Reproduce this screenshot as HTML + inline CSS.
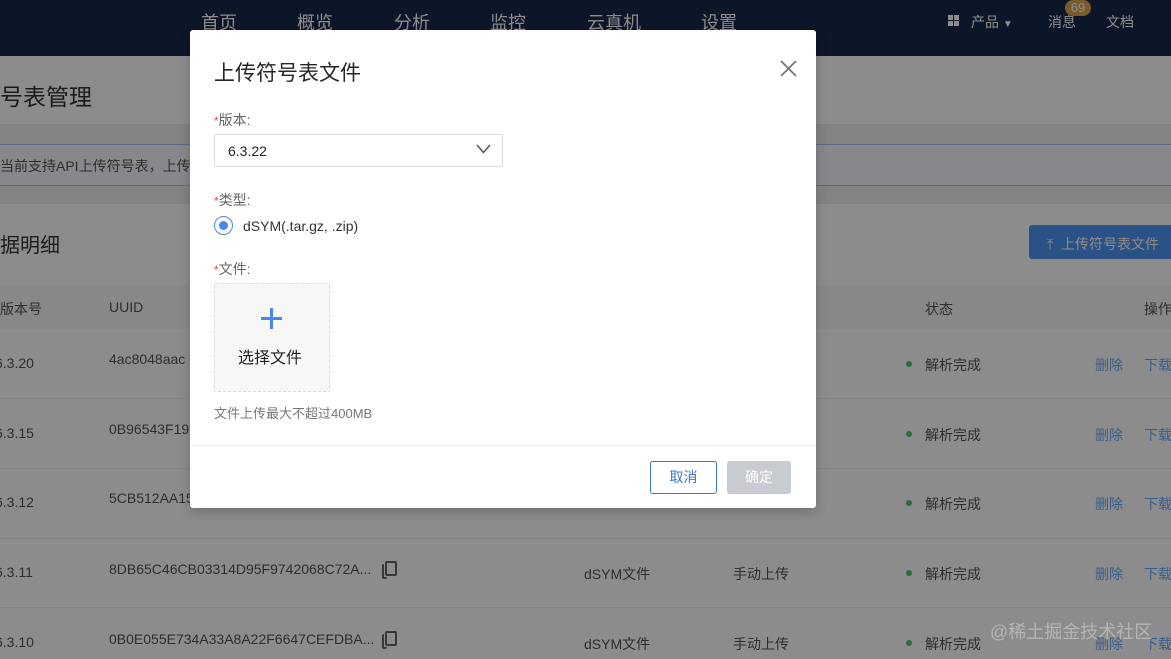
<!DOCTYPE html>
<html><head><meta charset="utf-8"><style>
*{margin:0;padding:0;box-sizing:border-box}
html,body{background:#fff}
body{width:1171px;height:659px;overflow:hidden;position:relative;font-family:"Liberation Sans","Noto Sans CJK SC",sans-serif;color:#555}
.a{position:absolute;white-space:nowrap}
.hdr{position:absolute;left:0;top:0;width:1171px;height:56px;background:#18274a}
.nav{color:#fff;font-size:18px;top:9px}
.tr{font-size:14px;color:#555}
.blue{color:#6aabff}
.dot{position:absolute;width:6px;height:6px;border-radius:3px;background:#54c36a}
.sep{position:absolute;left:0;width:1171px;height:1px;background:#eee}
.ov{position:absolute;left:0;top:0;width:1171px;height:659px;background:rgba(0,0,0,0.45)}
.modal{position:absolute;left:190px;top:30px;width:626px;height:478px;background:#fff;border-radius:3px;box-shadow:0 4px 12px rgba(0,0,0,.2)}
.lbl{font-size:14px;color:#666}
.lbl b{color:#e04848;font-weight:normal;font-size:12px}
.cp{position:absolute;width:12px;height:15px;border:2px solid #666;border-radius:2px}
</style></head><body>
<div class="hdr"></div>
<div class="a nav" style="left:201px">首页</div>
<div class="a nav" style="left:297px">概览</div>
<div class="a nav" style="left:394px">分析</div>
<div class="a nav" style="left:490px">监控</div>
<div class="a nav" style="left:587px">云真机</div>
<div class="a nav" style="left:701px">设置</div>
<div class="a" style="left:948px;top:15px;width:5px;height:5px;background:#fff;box-shadow:6px 0 #fff,0 6px #fff,6px 6px #fff"></div>
<div class="a" style="left:971px;top:12px;color:#fff;font-size:14px">产品 <span style="font-size:10px">▼</span></div>
<div class="a" style="left:1048px;top:12px;color:#fff;font-size:14px">消息</div>
<div class="a" style="left:1065px;top:0px;width:26px;height:16px;border-radius:8px;background:#dea44c;color:#fff;font-size:13px;text-align:center;line-height:16px">69</div>
<div class="a" style="left:1106px;top:12px;color:#fff;font-size:14px">文档</div>

<div class="a" style="left:0;top:124px;width:1171px;height:80px;background:#eee"></div>
<div class="a" style="left:0;top:144px;width:1171px;height:42px;background:#f5f8ff;border-top:1px solid #a8c0f0;border-bottom:1px solid #a8c0f0"></div>
<div class="a" style="left:0;top:78px;font-size:23px;color:#333">号表管理</div>
<div class="a" style="left:0;top:156px;font-size:14px;color:#555">当前支持API上传符号表，上传</div>
<div class="a" style="left:0;top:229px;font-size:20px;color:#333">据明细</div>
<div class="a" style="left:1029px;top:225px;width:150px;height:34px;background:#4f95f5;border-radius:3px"></div>
<div class="a" style="left:1047px;top:234px;font-size:14px;color:#fff">⤒ &nbsp;上传符号表文件</div>
<div class="a" style="left:0;top:285px;width:1171px;height:44px;background:#f7f7f7"></div>
<div class="a tr" style="left:0;top:299px">版本号</div>
<div class="a tr" style="left:109px;top:299px">UUID</div>
<div class="a tr" style="left:925px;top:299px">状态</div>
<div class="a tr" style="left:1144px;top:299px">操作</div>

<div class="sep" style="top:398px"></div><div class="sep" style="top:468px"></div><div class="sep" style="top:538px"></div><div class="sep" style="top:607px"></div>

<div class="a tr" style="left:-5px;top:355px">6.3.20</div><div class="a tr" style="left:109px;top:351px">4ac8048aac</div>
<div class="a tr" style="left:-5px;top:425px">6.3.15</div><div class="a tr" style="left:109px;top:421px">0B96543F19</div>
<div class="a tr" style="left:-5px;top:494px">6.3.12</div><div class="a tr" style="left:109px;top:490px">5CB512AA15</div>
<div class="a tr" style="left:-5px;top:564px">6.3.11</div><div class="a tr" style="left:109px;top:561px">8DB65C46CB03314D95F9742068C72A...</div>
<div class="a tr" style="left:-5px;top:634px">6.3.10</div><div class="a tr" style="left:109px;top:631px">0B0E055E734A33A8A22F6647CEFDBA...</div>
<div class="cp" style="left:385px;top:561px"></div><div class="cp" style="left:382px;top:564px;border-right:none;border-top:none;width:5px"></div>
<div class="cp" style="left:385px;top:631px"></div><div class="cp" style="left:382px;top:634px;border-right:none;border-top:none;width:5px"></div>
<div class="a tr" style="left:584px;top:564px">dSYM文件</div><div class="a tr" style="left:733px;top:564px">手动上传</div>
<div class="a tr" style="left:584px;top:634px">dSYM文件</div><div class="a tr" style="left:733px;top:634px">手动上传</div>

<div class="dot" style="left:906px;top:361px"></div><div class="a tr" style="left:925px;top:355px">解析完成</div><div class="a tr blue" style="left:1095px;top:355px">删除</div><div class="a tr blue" style="left:1144px;top:355px">下载</div>
<div class="dot" style="left:906px;top:431px"></div><div class="a tr" style="left:925px;top:425px">解析完成</div><div class="a tr blue" style="left:1095px;top:425px">删除</div><div class="a tr blue" style="left:1144px;top:425px">下载</div>
<div class="dot" style="left:906px;top:500px"></div><div class="a tr" style="left:925px;top:494px">解析完成</div><div class="a tr blue" style="left:1095px;top:494px">删除</div><div class="a tr blue" style="left:1144px;top:494px">下载</div>
<div class="dot" style="left:906px;top:570px"></div><div class="a tr" style="left:925px;top:564px">解析完成</div><div class="a tr blue" style="left:1095px;top:564px">删除</div><div class="a tr blue" style="left:1144px;top:564px">下载</div>
<div class="dot" style="left:906px;top:640px"></div><div class="a tr" style="left:925px;top:634px">解析完成</div><div class="a tr blue" style="left:1095px;top:634px">删除</div><div class="a tr blue" style="left:1144px;top:634px">下载</div>

<div class="ov"></div>
<div class="a" style="left:990px;top:618px;font-size:18px;color:#b5b5b5">@稀土掘金技术社区</div>

<div class="modal">
 <div class="a" style="left:24px;top:27px;font-size:21px;color:#262626">上传符号表文件</div>
 <svg class="a" style="left:590px;top:30px" width="17" height="17" viewBox="0 0 17 17"><path d="M1 1L16 16M16 1L1 16" stroke="#777" stroke-width="1.8"/></svg>
 <div class="a lbl" style="left:24px;top:80px"><b>*</b>版本:</div>
 <div class="a" style="left:24px;top:104px;width:289px;height:33px;border:1px solid #ddd;border-radius:2px"></div>
 <div class="a" style="left:38px;top:113px;font-size:14px;color:#222">6.3.22</div>
 <svg class="a" style="left:286px;top:114px" width="15" height="10" viewBox="0 0 15 10"><path d="M1 1L7.5 8.5L14 1" fill="none" stroke="#555" stroke-width="1.5"/></svg>
 <div class="a lbl" style="left:24px;top:160px"><b>*</b>类型:</div>
 <div class="a" style="left:24px;top:186px;width:19px;height:19px;border:1.5px solid #4a87e8;border-radius:50%"></div>
 <div class="a" style="left:29px;top:191px;width:9px;height:9px;background:#4a87e8;border-radius:50%"></div>
 <div class="a" style="left:53px;top:188px;font-size:14px;color:#333">dSYM(.tar.gz, .zip)</div>
 <div class="a lbl" style="left:24px;top:229px"><b>*</b>文件:</div>
 <div class="a" style="left:24px;top:253px;width:116px;height:109px;background:#f7f7f7;border:1px dashed #ddd;border-radius:2px"></div>
 <div class="a" style="left:71px;top:287px;width:21px;height:3px;background:#4a87e8"></div>
 <div class="a" style="left:80px;top:278px;width:3px;height:21px;background:#4a87e8"></div>
 <div class="a" style="left:48px;top:314px;font-size:16px;color:#222">选择文件</div>
 <div class="a" style="left:24px;top:373px;font-size:13px;color:#777">文件上传最大不超过400MB</div>
 <div class="a" style="left:0;top:415px;width:626px;height:1px;background:#eee"></div>
 <div class="a" style="left:460px;top:431px;width:67px;height:33px;border:1px solid #3b74c9;border-radius:3px;color:#3b74c9;font-size:14px;text-align:center;line-height:31px">取消</div>
 <div class="a" style="left:537px;top:431px;width:64px;height:33px;background:#c8cbd1;border-radius:3px;color:#fff;font-size:14px;text-align:center;line-height:33px">确定</div>
</div>
</body></html>
